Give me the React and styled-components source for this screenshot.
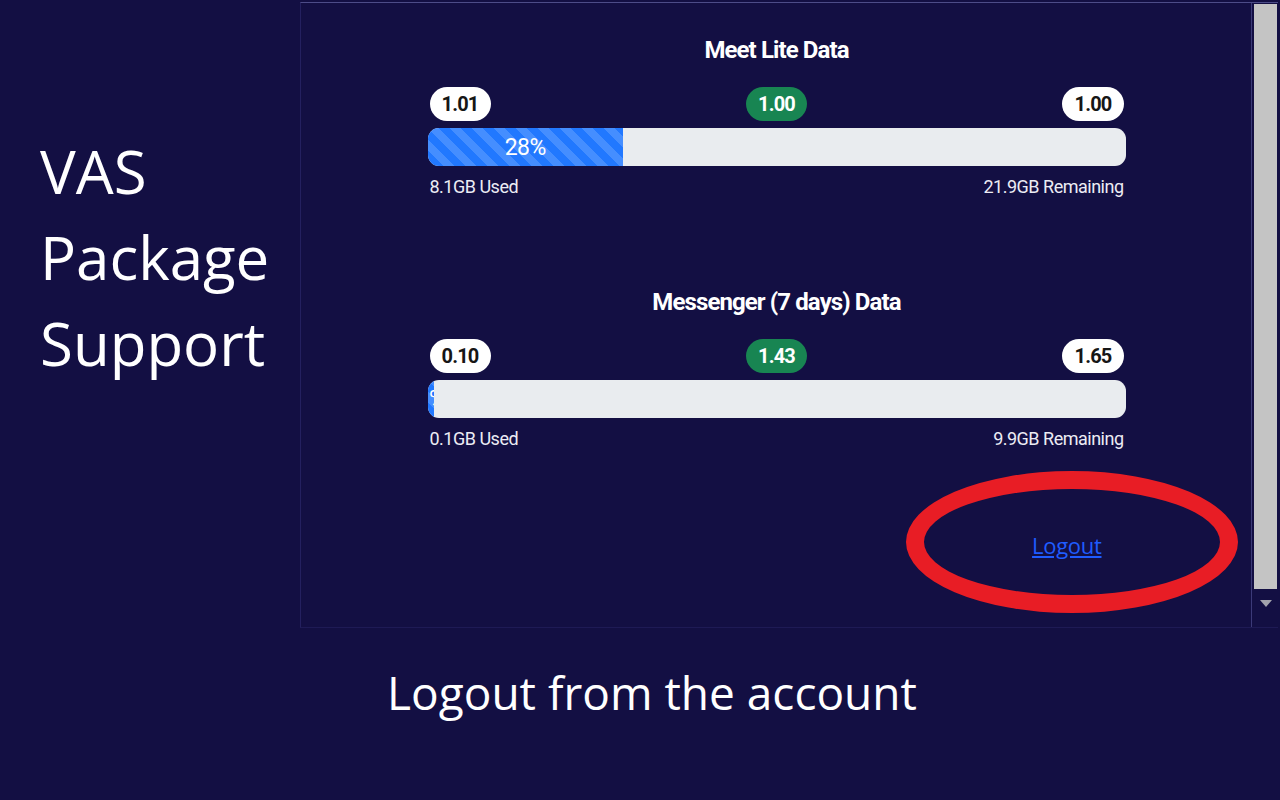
import React from "react";
import styled, { createGlobalStyle } from "styled-components";

const Global = createGlobalStyle`
  html, body { margin: 0; padding: 0; background: #130f43; }
  body { width: 1280px; height: 800px; overflow: hidden; }
  #root { width: 1280px; height: 800px; }
`;

const Page = styled.div`
  width: 1280px;
  height: 800px;
  background: #130f43;
  display: flex;
  flex-direction: column;
  font-family: "Open Sans", "Noto Sans", sans-serif;
  color: #fff;
`;

const TopRow = styled.div`
  display: flex;
  height: 628px;
`;

const Intro = styled.div`
  width: 260px;
  padding: 128px 0 0 40px;
  font-size: 60px;
  line-height: 86px;
  font-weight: 400;
  color: #ffffff;
`;

const Panel = styled.div`
  margin-top: 2px;
  width: 978px;
  height: 626px;
  display: flex;
  border-top: 1px solid #4d4c88;
  border-left: 1px solid #24205f;
  border-bottom: 1px solid #1e1a55;
  box-sizing: border-box;
`;

const Content = styled.div`
  position: relative;
  flex: 1;
  display: flex;
  flex-direction: column;
  align-items: center;
  padding-top: 32px;
  padding-left: 1px;
  border-right: 1px solid #3c3a78;
  font-family: Roboto, "Liberation Sans", sans-serif;
`;

const Section = styled.div`
  width: 698px;
  display: flex;
  flex-direction: column;
  & + & { margin-top: 89px; }
`;

const Title = styled.div`
  text-align: center;
  font-size: 24px;
  line-height: 30px;
  font-weight: 700;
  letter-spacing: -0.9px;
  color: #ffffff;
`;

const BadgeRow = styled.div`
  margin-top: 22px;
  display: flex;
  justify-content: space-between;
  align-items: center;
  padding: 0 2px;
`;

const Badge = styled.span`
  height: 34px;
  min-width: 37px;
  padding: 0 12px;
  border-radius: 17px;
  display: inline-flex;
  align-items: center;
  justify-content: center;
  font-size: 20px;
  font-weight: 700;
  letter-spacing: -0.8px;
  background: ${(p) => (p.$tone === "green" ? "#188552" : "#ffffff")};
  color: ${(p) => (p.$tone === "green" ? "#ffffff" : "#161616")};
`;

const Track = styled.div`
  margin-top: 7px;
  height: 38px;
  border-radius: 11px;
  background: #e9ecef;
  overflow: hidden;
  display: flex;
`;

const Fill = styled.div`
  height: 100%;
  overflow: hidden;
  display: flex;
  align-items: center;
  justify-content: center;
  background-color: #2178ff;
  background-image: linear-gradient(
    45deg,
    rgba(255, 255, 255, 0.16) 25%,
    transparent 25%,
    transparent 50%,
    rgba(255, 255, 255, 0.16) 50%,
    rgba(255, 255, 255, 0.16) 75%,
    transparent 75%,
    transparent
  );
  background-size: 22px 22px;
  color: #ffffff;
  font-size: 23px;
  letter-spacing: -0.6px;
  white-space: nowrap;
`;

const Legend = styled.div`
  margin-top: 10px;
  display: flex;
  justify-content: space-between;
  padding: 0 2px;
  font-size: 18px;
  line-height: 22px;
  letter-spacing: -0.5px;
  color: #ececf4;
`;

const LogoutRow = styled.div`
  width: 698px;
  margin-top: 80px;
  display: flex;
  justify-content: flex-end;
  padding-right: 24px;
  box-sizing: border-box;
`;

const LogoutWrap = styled.div`
  position: relative;
`;

const LogoutLink = styled.a`
  font-family: "Open Sans", "Noto Sans", sans-serif;
  font-size: 22px;
  line-height: 30px;
  letter-spacing: -0.3px;
  color: #1f5cff;
  text-decoration: underline;
  cursor: pointer;
`;

const Highlight = styled.div`
  position: absolute;
  left: 50%;
  top: 50%;
  width: 332px;
  height: 142px;
  transform: translate(-50%, -50%) translate(5px, -3px);
  border: 18px solid #e81d25;
  border-radius: 50%;
  box-sizing: border-box;
  pointer-events: none;
`;

const Scrollbar = styled.div`
  width: 26px;
  display: flex;
  flex-direction: column;
  align-items: center;
  padding: 1px 1px 0 2px;
  box-sizing: border-box;
`;

const Thumb = styled.div`
  width: 23px;
  height: 585px;
  background: #c4c4c4;
`;

const Arrow = styled.div`
  margin-top: 11px;
  width: 0;
  height: 0;
  border-left: 6px solid transparent;
  border-right: 6px solid transparent;
  border-top: 7px solid #a3a3ad;
`;

const Caption = styled.div`
  margin-top: 34px;
  padding-left: 24px;
  text-align: center;
  font-size: 46px;
  line-height: 60px;
  color: #ffffff;
`;

const usage = [
  {
    title: "Meet Lite Data",
    badges: ["1.01", "1.00", "1.00"],
    pct: 28,
    used: "8.1GB Used",
    remaining: "21.9GB Remaining",
  },
  {
    title: "Messenger (7 days) Data",
    badges: ["0.10", "1.43", "1.65"],
    pct: 1,
    used: "0.1GB Used",
    remaining: "9.9GB Remaining",
  },
];

export default function App() {
  return (
    <Page>
      <Global />
      <TopRow>
        <Intro>
          VAS
          <br />
          Package
          <br />
          Support
        </Intro>
        <Panel>
          <Content>
            {usage.map((u) => (
              <Section key={u.title}>
                <Title>{u.title}</Title>
                <BadgeRow>
                  <Badge>{u.badges[0]}</Badge>
                  <Badge $tone="green">{u.badges[1]}</Badge>
                  <Badge>{u.badges[2]}</Badge>
                </BadgeRow>
                <Track>
                  <Fill style={{ width: `${u.pct}%` }}>{u.pct}%</Fill>
                </Track>
                <Legend>
                  <span>{u.used}</span>
                  <span>{u.remaining}</span>
                </Legend>
              </Section>
            ))}
            <LogoutRow>
              <LogoutWrap>
                <LogoutLink>Logout</LogoutLink>
                <Highlight />
              </LogoutWrap>
            </LogoutRow>
          </Content>
          <Scrollbar>
            <Thumb />
            <Arrow />
          </Scrollbar>
        </Panel>
      </TopRow>
      <Caption>Logout from the account</Caption>
    </Page>
  );
}
